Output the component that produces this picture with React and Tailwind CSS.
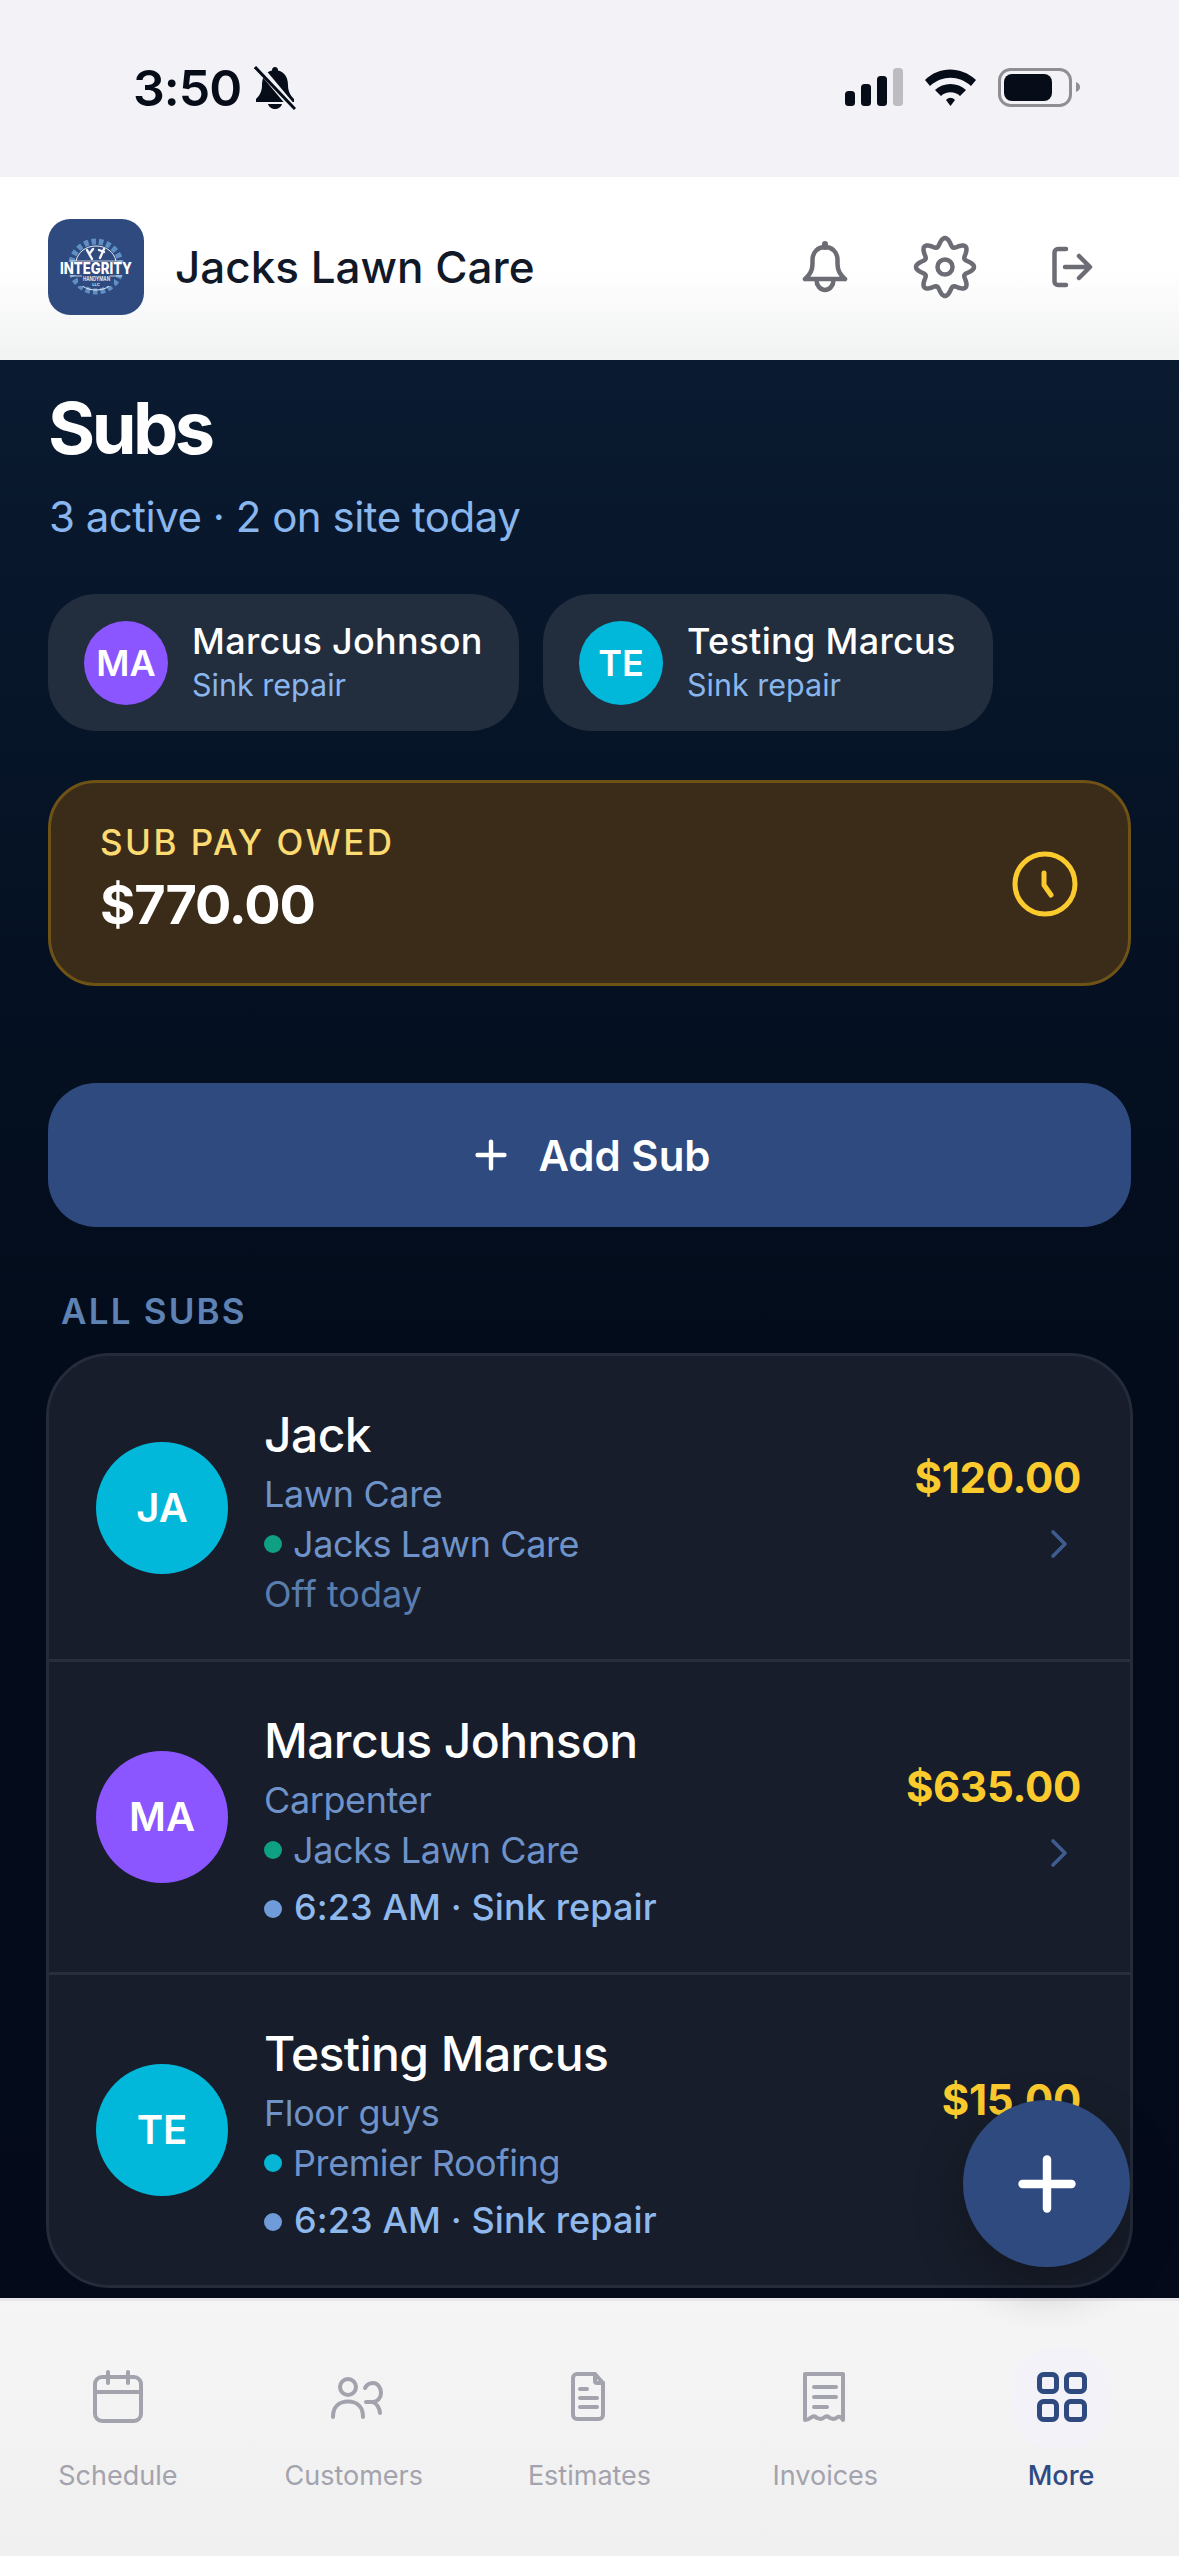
import React from 'react'
import { Plus, ChevronRight } from 'lucide-react'

const font = { fontFamily: 'Inter, "Noto Sans", sans-serif' }

const subs = [
  { initials: 'JA', name: 'Jack', role: 'Lawn Care', company: 'Jacks Lawn Care', dot: 'bg-[#0f9f82]', avatar: 'bg-[#02b8da]', amount: '$120.00', off: true },
  { initials: 'MA', name: 'Marcus Johnson', role: 'Carpenter', company: 'Jacks Lawn Care', dot: 'bg-[#0f9f82]', avatar: 'bg-[#8b55ff]', amount: '$635.00' },
  { initials: 'TE', name: 'Testing Marcus', role: 'Floor guys', company: 'Premier Roofing', dot: 'bg-[#06b6d4]', avatar: 'bg-[#02b8da]', amount: '$15.00' },
]

// wavy 8 lobe outline for the settings gear
const gearPath = () => {
  const pts = []
  for (let i = 0; i < 144; i++) {
    const t = (i / 144) * Math.PI * 2
    const r = 25 + 4 * Math.cos(8 * t)
    pts.push(`${(32 + r * Math.sin(t)).toFixed(2)} ${(32 - r * Math.cos(t)).toFixed(2)}`)
  }
  return `M${pts.join('L')}Z`
}

const StatusBar = () => (
  <div className="h-[177px] shrink-0 bg-[#f2f2f7] flex items-start justify-between pl-[133px] pr-[98px] pt-[60px]">
    <div className="flex items-center gap-[13px] text-[#060d18]">
      <span className="text-[50px] leading-[56px] font-semibold tracking-[-1px]">3:50</span>
      <svg width="42" height="44" viewBox="0 0 42 44" fill="none">
        <path d="M21 1c-2 0-3 1.500-3 3.500C11 6 8 12 8 19c0 6-2 10-6 14v3h38v-3c-4-4-6-8-6-14 0-7-3-13-10-14.500C24 2.500 23 1 21 1z" fill="currentColor" />
        <path d="M14 38c1 3.500 4 5 7 5s6-1.500 7-5z" fill="currentColor" />
        <path d="M3 -1L40 43" stroke="#f2f2f7" strokeWidth="7" />
        <path d="M1 1L41 43" stroke="currentColor" strokeWidth="3" />
      </svg>
    </div>
    <svg width="236" height="40" viewBox="0 0 236 40" className="mt-[8px]" fill="none">
      <rect x="0" y="23" width="10" height="15" rx="3.500" fill="#060d18" />
      <rect x="16" y="16" width="10" height="22" rx="3.500" fill="#060d18" />
      <rect x="32" y="8" width="10" height="30" rx="3.500" fill="#060d18" />
      <rect x="48" y="0" width="10" height="38" rx="3.500" fill="#bcbcc1" />
      <path d="M80 12C94 -2 116 -2 131 12L126 18C114 7 97 7 85 18z" fill="#060d18" />
      <path d="M90 22C98 14 113 14 121 22L115 28C110 23 101 23 96 28z" fill="#060d18" />
      <path d="M101 32C104 29 107 29 110 32L105.500 38z" fill="#060d18" />
      <rect x="154.500" y="1.500" width="71" height="36" rx="11" stroke="#8e8e93" strokeWidth="3" />
      <rect x="159" y="6" width="48" height="27" rx="8" fill="#060d18" />
      <path d="M231 14c3 1 4 3 4 5s-1 4-4 5z" fill="#8e8e93" />
    </svg>
  </div>
)

const Logo = () => (
  <div className="w-[96px] h-[96px] rounded-[22px] bg-[#2f4a7f] shrink-0">
    <svg width="96" height="96" viewBox="0 0 96 96" fill="none">
      <circle cx="48" cy="47.500" r="25" stroke="#5f8fc4" strokeWidth="6" strokeDasharray="4.500 3" />
      <path d="M28 42C30 33 38 27 48 27s18 6 20 15" stroke="#e8edf3" strokeWidth="1" />
      <path d="M30 62c4 6 10 9 18 9s14-3 18-9" stroke="#e8edf3" strokeWidth="1" />
      <rect x="10" y="43" width="76" height="13" fill="#2f4a7f" />
      <rect x="30" y="55" width="36" height="12" fill="#2f4a7f" />
      <path d="M22 42H74M22 57H34M62 57H74" stroke="#e8edf3" strokeWidth="0.800" />
      <path d="M39 31l5 9M45 30l-3 4M56 30l-4 9M51 31l5 2" stroke="#f4f6f9" strokeWidth="2.400" strokeLinecap="round" />
      <text x="12" y="55" fontFamily="Inter, sans-serif" fontWeight="800" fontSize="15.500" fill="#fff" textLength="72" lengthAdjust="spacingAndGlyphs">INTEGRITY</text>
      <text x="35" y="61.500" fontFamily="Inter, sans-serif" fontWeight="700" fontSize="6" fill="#dfe5ee" textLength="27" lengthAdjust="spacingAndGlyphs">HANDYMAN</text>
      <text x="48" y="67" textAnchor="middle" fontFamily="Inter, sans-serif" fontWeight="700" fontSize="4" fill="#dfe5ee">LLC</text>
    </svg>
  </div>
)

const Header = () => (
  <div className="h-[183px] shrink-0 bg-linear-to-b from-white from-50% to-[#f1f2f2] flex items-center pl-[48px] pr-[86px] pb-[4px]">
    <Logo />
    <h1 className="ml-[31px] text-[44px] leading-[52px] font-medium text-[#111827] flex-1">Jacks Lawn Care</h1>
    <div className="flex items-center text-[#6c6c74]">
      <svg width="48" height="54" viewBox="0 0 48 54" fill="none" stroke="currentColor" strokeWidth="4.500" strokeLinecap="round" strokeLinejoin="round">
        <path d="M4 39H44M4 39C9 35 11.500 30 11.500 24V20C11.500 12 17 7 24 7C31 7 36.500 12 36.500 20V24C36.500 30 39 35 44 39" />
        <path d="M24 4V7" strokeWidth="6" />
        <path d="M15.500 40a8.500 10 0 0 0 17 0" />
      </svg>
      <svg width="64" height="64" viewBox="0 0 64 64" fill="none" stroke="currentColor" strokeWidth="4.500" strokeLinejoin="round" className="ml-[64px]">
        <path d={gearPath()} />
        <circle cx="32" cy="32" r="7.500" />
      </svg>
      <svg width="43" height="44" viewBox="0 0 43 44" fill="none" stroke="currentColor" strokeWidth="4.500" strokeLinecap="round" strokeLinejoin="round" className="ml-[73px]">
        <path d="M16 4H8a3.500 3.500 0 0 0-3.500 3.500V36.500a3.500 3.500 0 0 0 3.500 3.500H16" />
        <path d="M15 22H39M29 11L40 22L29 33" />
      </svg>
    </div>
  </div>
)

const Chip = ({ initials, name, color, width }) => (
  <div className={`${width} h-[137px] rounded-[48px] bg-[#222d3d] flex items-center pl-[36px]`}>
    <div className={`w-[84px] h-[84px] rounded-full ${color} flex items-center justify-center text-white text-[36px] font-semibold`}>
      {initials}
    </div>
    <div className="ml-[24px]">
      <div className="text-[36px] leading-[40px] font-medium tracking-[0.3px] text-white">{name}</div>
      <div className="mt-[4px] text-[30.5px] leading-[40px] text-[#8ab6ee]">Sink repair</div>
    </div>
  </div>
)

const SubRow = ({ sub, last }) => (
  <div className={`flex items-center pl-[47px] pr-[49px] ${last ? '' : 'border-b-[3px] border-[#282e3c]'}`}>
    <div className={`w-[132px] h-[132px] rounded-full ${sub.avatar} flex items-center justify-center text-white text-[40px] font-semibold shrink-0`}>
      {sub.initials}
    </div>
    <div className="ml-[36px] flex-1 pt-[50px] pb-[40px]">
      <div className="text-[48px] leading-[58px] font-medium tracking-[-0.6px] text-white">{sub.name}</div>
      <div className="mt-[5px] text-[36px] leading-[50px] tracking-[-0.4px] text-[#6f93c9]">{sub.role}</div>
      <div className="flex items-center text-[36px] leading-[50px] tracking-[-0.4px] text-[#6f93c9]">
        <span className={`w-[18px] h-[18px] rounded-full ${sub.dot} mr-[11px]`} />
        {sub.company}
      </div>
      {sub.off ? (
        <div className="text-[36px] leading-[50px] text-[#5a7db0]">Off today</div>
      ) : (
        <div className="mt-[7px] flex items-center text-[36px] leading-[50px] font-medium tracking-[0.1px] text-[#8fb8ec]">
          <span className="w-[18px] h-[18px] rounded-full bg-[#6f9bd8] mr-[12px] mt-[4px]" />
          6:23 AM · Sink repair
        </div>
      )}
    </div>
    <div className="flex flex-col items-end mt-[5px]">
      <div className="text-[42px] leading-[50px] font-bold tracking-[-0.3px] text-[#fbcb2e]">{sub.amount}</div>
      <ChevronRight size={48} strokeWidth={1.800} className="mt-[17px] -mr-[2px] text-[#3f5c92]" />
    </div>
  </div>
)

const NavSvg = ({ children, strokeWidth = 4 }) => (
  <svg width="60" height="60" viewBox="0 0 60 60" fill="none" stroke="currentColor" strokeWidth={strokeWidth} strokeLinecap="round" strokeLinejoin="round">
    {children}
  </svg>
)

const tabs = [
  {
    label: 'Schedule',
    icon: (
      <NavSvg>
        <rect x="7" y="9" width="46" height="44" rx="7" />
        <path d="M7 24H53M20 4V15M40 4V15" />
      </NavSvg>
    ),
  },
  {
    label: 'Customers',
    icon: (
      <NavSvg>
        <circle cx="24" cy="19" r="8" />
        <path d="M9 49C9 39 15 33.500 24 33.500C33 33.500 39 39 39 49" />
        <path d="M41 20C43 16 47 15 49 15C54 15 57 20 57 25C57 30 53 34 49 34H42M49 34C53 36 55.500 40 56 45" />
      </NavSvg>
    ),
  },
  {
    label: 'Estimates',
    icon: (
      <NavSvg>
        <path d="M18 6H36L44 15V47a4 4 0 0 1-4 4H18a4 4 0 0 1-4-4V10a4 4 0 0 1 4-4z" />
        <path d="M36 6V13a2 2 0 0 0 2 2H44" />
        <path d="M21 21H28M21 30H38M21 39H38" />
      </NavSvg>
    ),
  },
  {
    label: 'Invoices',
    icon: (
      <NavSvg>
        <path d="M10 52V6H48V52Q45 47 42 49.500T35 50Q32 47 29 49.500T22 50Q19 47 16 49.500T10 52z" />
        <path d="M19 19H41M19 29H41M19 39H32" />
      </NavSvg>
    ),
  },
  {
    label: 'More',
    active: true,
    icon: (
      <NavSvg strokeWidth={5}>
        <rect x="8.500" y="6.500" width="17" height="17" rx="4" />
        <rect x="35.500" y="6.500" width="18" height="17" rx="4" />
        <rect x="8.500" y="33.500" width="17" height="18" rx="4" />
        <rect x="35.500" y="33.500" width="18" height="18" rx="4" />
      </NavSvg>
    ),
  },
]

const BottomNav = () => (
  <div className="h-[258px] shrink-0 border-t-[3px] border-[#e6e6ea] bg-linear-to-b from-[#f5f5f6] to-[#f0f0f0] grid grid-cols-5">
    {tabs.map(tab => (
      <div key={tab.label} className={`flex flex-col items-center pt-[67px] ${tab.active ? 'text-[#2f4a7f]' : 'text-[#a3a3ae]'}`}>
        <div className={tab.active ? 'px-[19px] py-[20px] -my-[20px] rounded-[38px] bg-[#f2f2f8]' : ''}>{tab.icon}</div>
        <span className={`mt-[30px] text-[27px] leading-[36px] ${tab.active ? 'font-medium' : ''}`}>{tab.label}</span>
      </div>
    ))}
  </div>
)

export default function App() {
  return (
    <div className="relative w-[1179px] h-[2556px] overflow-hidden flex flex-col" style={font}>
      <StatusBar />
      <Header />

      <div className="flex-1 min-h-0 overflow-hidden px-[48px] pt-[28px] bg-linear-to-b from-[#0a1a30] via-[#030c1b] via-50% to-[#040a1a]">
        <h2 className="text-[72px] leading-[80px] font-bold tracking-[-3.5px] text-white">Subs</h2>
        <p className="mt-[29px] ml-[1px] text-[42px] leading-[40px] tracking-[-0.5px] text-[#8ab6ee]">3 active · 2 on site today</p>

        <div className="mt-[57px] flex gap-[24px]">
          <Chip initials="MA" name="Marcus Johnson" color="bg-[#8b55ff]" width="w-[471px]" />
          <Chip initials="TE" name="Testing Marcus" color="bg-[#02b8da]" width="w-[450px]" />
        </div>

        {/* Sub pay owed */}
        <div className="mt-[49px] h-[206px] rounded-[48px] border-[3px] border-[#6f5215] bg-[#3b2c1a] flex items-center justify-between pl-[49px] pr-[48px]">
          <div className="pb-[9px]">
            <div className="text-[35px] leading-[44px] font-medium tracking-[2.5px] text-[#fcdc72]">SUB PAY OWED</div>
            <div className="mt-[9px] text-[54px] leading-[64px] font-bold tracking-[-1.1px] text-white">$770.00</div>
          </div>
          <svg width="70" height="70" viewBox="0 0 70 70" fill="none" stroke="#fbcb2e" strokeWidth="5" strokeLinecap="round" strokeLinejoin="round" className="mt-[2px]">
            <circle cx="35" cy="35" r="30" />
            <path d="M34 24V36L41 46" />
          </svg>
        </div>

        <button className="mt-[97px] w-full h-[144px] rounded-[48px] bg-[#2f4a7f] flex items-center justify-center text-white text-[42px] font-semibold">
          <Plus size={46} strokeWidth={2.300} className="mr-[24px]" />
          Add Sub
        </button>

        <div className="mt-[66px] ml-[13px] text-[35px] leading-[36px] font-semibold tracking-[2.2px] text-[#5f82b5]">ALL SUBS</div>

        <div className="mt-[24px] -mx-[2px] rounded-[64px] border-[3px] border-[#252b3a] bg-[#171d2a] overflow-hidden">
          {subs.map((sub, i) => (
            <SubRow key={sub.name} sub={sub} last={i === subs.length - 1} />
          ))}
        </div>
      </div>

      <BottomNav />

      {/* floating add button */}
      <button className="absolute left-[963px] top-[2100px] w-[167px] h-[167px] rounded-full bg-[#2f4a7f] flex items-center justify-center text-white shadow-[0_20px_50px_rgba(0,0,0,0.25)]">
        <Plus size={84} strokeWidth={2.400} />
      </button>
    </div>
  )
}
